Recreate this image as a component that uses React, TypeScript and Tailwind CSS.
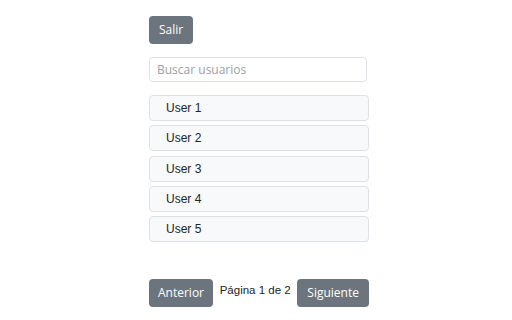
import React from "react";

const btn =
  "bg-[#6c757d] text-white rounded-[4px] h-[28px] text-[12px] leading-none flex items-center";

export default function App() {
  const users = ["User 1", "User 2", "User 3", "User 4", "User 5"];
  return (
    <div className="w-[512px] h-[320px] bg-white flex justify-center">
      <div className="w-[220px] ml-[6px] pt-[16px] flex flex-col" style={{ fontFamily: '"Open Sans", sans-serif' }}>
        <div className="flex">
          <button className={`${btn} px-[10px]`}>Salir</button>
        </div>
        <input
          className="mt-[13px] w-[218px] h-[25px] border border-[#dee2e6] rounded-[4px] px-[7px] text-[12px] text-[#212529] placeholder:text-[#9aa0a6] outline-none"
          placeholder="Buscar usuarios"
        />
        <div className="mt-[13px] flex flex-col gap-[4.3px]" style={{ fontFamily: '"Liberation Sans", Arial, sans-serif' }}>
          {users.map((u) => (
            <div
              key={u}
              className="h-[26px] bg-[#f8f9fa] border border-[#dee2e6] rounded-[4px] pl-[16px] flex items-center text-[12px] text-[#212529]"
            >
              {u}
            </div>
          ))}
        </div>
        <div className="mt-[37px] flex items-start justify-between">
          <button className={`${btn} px-[9px]`}>Anterior</button>
          <span
            className="text-[11.5px] text-[#212529] mt-[3px]"
            style={{ fontFamily: '"Liberation Sans", Arial, sans-serif' }}
          >
            Página 1 de 2
          </span>
          <button className={`${btn} px-[10px]`}>Siguiente</button>
        </div>
      </div>
    </div>
  );
}
